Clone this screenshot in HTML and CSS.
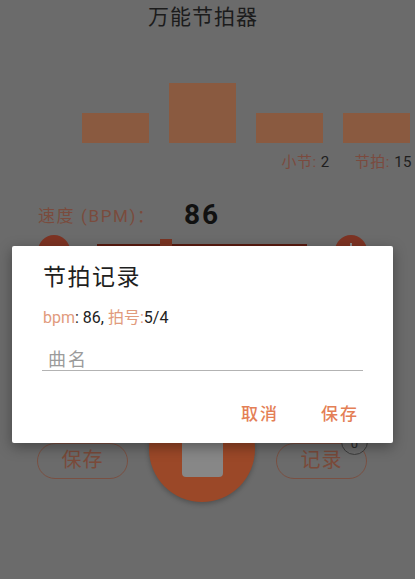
FILE: index.html
```html
<!DOCTYPE html>
<html lang="zh-CN">
<head>
<meta charset="utf-8">
<title>万能节拍器</title>
<link rel="stylesheet" href="styles.css">
</head>
<body>
<div class="app">
  <header class="title">万能节拍器</header>

  <div class="bars">
    <div class="bar"></div>
    <div class="bar bar-accent"></div>
    <div class="bar"></div>
    <div class="bar"></div>
  </div>

  <div class="counts">
    <span class="count"><span class="count-label">小节:</span> 2</span>
    <span class="count"><span class="count-label">节拍:</span> 15</span>
  </div>

  <div class="speed">
    <span class="speed-label">速度 (BPM)：</span>
    <span class="speed-value">86</span>
  </div>

  <div class="slider-row">
    <div class="round-btn"><span class="sign-h"></span></div>
    <div class="slider">
      <div class="track"></div>
      <div class="thumb"></div>
    </div>
    <div class="round-btn"><span class="sign-h"></span><span class="sign-v"></span></div>
  </div>

  <div class="controls">
    <div class="pill">保存</div>
    <div class="play"><div class="stop"></div></div>
    <div class="pill pill-badged">记录<span class="badge">0</span></div>
  </div>
</div>

<div class="dialog">
  <div class="dialog-title">节拍记录</div>
  <div class="dialog-info"><span class="hl">bpm</span>: 86, <span class="hl">拍号:</span>5/4</div>
  <input class="dialog-input" type="text" placeholder="曲名">
  <div class="dialog-actions">
    <button class="dialog-btn">取消</button>
    <button class="dialog-btn">保存</button>
  </div>
</div>
</body>
</html>
```

FILE: styles.css
```css
* { box-sizing: border-box; }

html, body {
  margin: 0;
  padding: 0;
}

body {
  width: 415px;
  height: 579px;
  overflow: hidden;
  position: relative;
  background: #6b6b6b;
  font-family: Roboto, "Noto Sans CJK SC", sans-serif;
  color: #1c1c1c;
}

.app {
  display: flex;
  flex-direction: column;
}

.title {
  height: 34px;
  line-height: 34px;
  text-align: center;
  font-size: 21px;
  letter-spacing: 1px;
  padding-right: 9px;
  color: #1c1c1c;
}

.bars {
  display: flex;
  align-items: flex-end;
  gap: 20px;
  height: 60px;
  margin-top: 49px;
  padding-left: 82px;
}

.bar {
  width: 67px;
  height: 30px;
  background: #8a5a40;
}

.bar-accent {
  height: 60px;
}

.counts {
  display: flex;
  justify-content: flex-end;
  gap: 25px;
  margin-top: 9px;
  padding-right: 3px;
  height: 20px;
  line-height: 20px;
  font-size: 15px;
  letter-spacing: 0.5px;
  color: #1e1e1e;
}

.count-label {
  color: #7b4a3e;
}

.speed {
  display: flex;
  align-items: center;
  margin-top: 26px;
  height: 32px;
  padding-left: 38px;
}

.speed-label {
  font-size: 17px;
  letter-spacing: 1.6px;
  color: #7a4b3d;
  width: 146px;
}

.speed-value {
  font-size: 28px;
  font-weight: 700;
  letter-spacing: 2px;
  color: #111;
}

.slider-row {
  display: flex;
  align-items: flex-start;
  margin-top: 5px;
  height: 32px;
  padding-left: 38px;
}

.round-btn {
  position: relative;
  width: 32px;
  height: 32px;
  border-radius: 50%;
  background: #7d3323;
  flex: none;
}

.sign-h, .sign-v {
  position: absolute;
  background: #8a8a8a;
}

.sign-h {
  left: 9px;
  top: 15px;
  width: 14px;
  height: 2px;
}

.sign-v {
  left: 15px;
  top: 8px;
  width: 2px;
  height: 16px;
}

.slider {
  position: relative;
  width: 210px;
  height: 32px;
  margin: 0 28px 0 27px;
}

.track {
  margin-top: 9px;
  height: 4px;
  background: #581a10;
}

.thumb {
  position: absolute;
  left: 63px;
  top: 4px;
  width: 12px;
  height: 20px;
  background: #7a3422;
}

.controls {
  display: flex;
  align-items: flex-start;
  gap: 21px;
  margin-top: 129px;
  padding-left: 37px;
}

.pill {
  position: relative;
  width: 91px;
  height: 36px;
  margin-top: 47px;
  border: 1.5px solid #7a5042;
  border-radius: 18px;
  text-align: center;
  line-height: 33px;
  font-size: 20px;
  letter-spacing: 1px;
  color: #7a4a3a;
}

.play {
  width: 106px;
  height: 106px;
  border-radius: 50%;
  background: #9b4828;
  display: flex;
  align-items: center;
  justify-content: center;
  box-shadow: 0 2px 5px rgba(0, 0, 0, 0.25);
}

.stop {
  width: 41px;
  height: 41px;
  border-radius: 4px;
  background: #878787;
  margin-top: 14px;
}

.badge {
  position: absolute;
  right: -2px;
  top: -16px;
  width: 27px;
  height: 27px;
  border-radius: 50%;
  border: 1.5px solid #3d3d3d;
  background: #6b6b6b;
  font-size: 13px;
  line-height: 30px;
  letter-spacing: 0;
  text-align: center;
  color: #2a2a2a;
}

.dialog {
  position: absolute;
  left: 12px;
  top: 246px;
  width: 381px;
  height: 197px;
  background: #fff;
  border-radius: 2px;
  box-shadow: 0 4px 14px rgba(0, 0, 0, 0.35);
  padding: 17px 30px 0 30px;
  display: flex;
  flex-direction: column;
}

.dialog-title {
  font-size: 23px;
  line-height: 30px;
  letter-spacing: 1.5px;
  padding-left: 1px;
  color: #1f1f1f;
}

.dialog-info {
  margin-top: 14px;
  font-size: 16px;
  line-height: 22px;
  padding-left: 1px;
  color: #222;
}

.hl {
  color: #e19b7d;
}

.dialog-input {
  margin-top: 20px;
  width: 100%;
  height: 22px;
  border: none;
  border-bottom: 1.5px solid #b3b3b3;
  padding: 0 0 0 6px;
  font-family: Roboto, "Noto Sans CJK SC", sans-serif;
  font-size: 18px;
  letter-spacing: 2px;
  line-height: 20px;
  background: transparent;
  outline: none;
  color: #222;
}

.dialog-input::placeholder {
  color: #9b9b9b;
}

.dialog-actions {
  display: flex;
  justify-content: flex-end;
  gap: 34px;
  margin-top: 25px;
}

.dialog-btn {
  border: none;
  background: transparent;
  padding: 8px 4px;
  font-family: Roboto, "Noto Sans CJK SC", sans-serif;
  font-size: 17px;
  font-weight: 500;
  letter-spacing: 2px;
  line-height: 20px;
  color: #e47f56;
}
```
